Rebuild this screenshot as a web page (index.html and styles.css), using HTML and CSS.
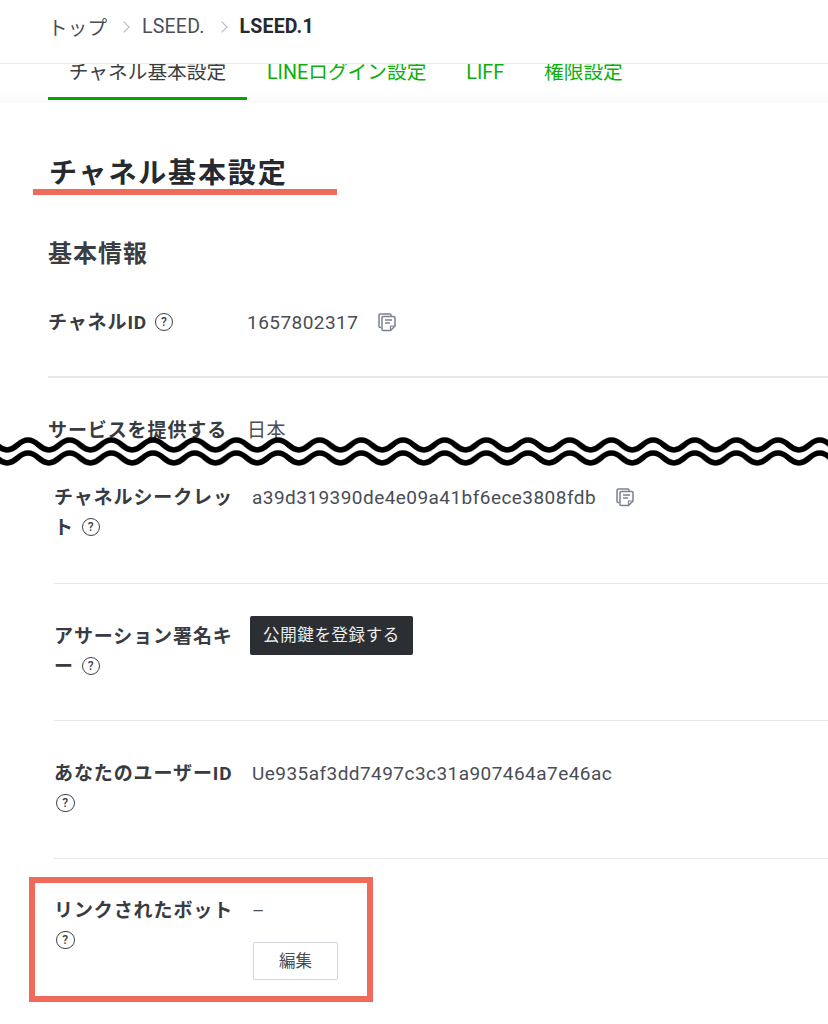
FILE: index.html
```html
<!DOCTYPE html>
<html lang="ja">
<head>
  <meta charset="UTF-8" />
  <title>チャネル基本設定</title>
  <link rel="stylesheet" href="styles.css">
</head>
<body>

  <svg width="0" height="0" class="defs">
    <symbol id="copy" viewBox="0 0 20 20">
      <path d="M4 15.500H3.200A1.200 1.200 0 0 1 2 14.300V3.200A1.200 1.200 0 0 1 3.200 2h9.600A1.200 1.200 0 0 1 14 3.200V4" fill="none" stroke="currentColor" stroke-width="1.500"/>
      <path d="M6.200 4.500h10.600A1.200 1.200 0 0 1 18 5.700V14l-4.500 4.500H6.200A1.200 1.200 0 0 1 5 17.300V5.700a1.200 1.200 0 0 1 1.200-1.200z" fill="#fff" stroke="currentColor" stroke-width="1.500"/>
      <path d="M8 8h7M8 11h5" fill="none" stroke="currentColor" stroke-width="1.500"/>
      <path d="M13.500 18.500V14H18" fill="none" stroke="currentColor" stroke-width="1.200"/>
    </symbol>
  </svg>

  <div class="top-part">
    <nav class="breadcrumb">
      <a>トップ</a>
      <span class="chevron"></span>
      <a>LSEED.</a>
      <span class="chevron"></span>
      <strong>LSEED.1</strong>
    </nav>

    <div class="tabs">
      <a class="tab active">チャネル基本設定</a>
      <a class="tab">LINEログイン設定</a>
      <a class="tab">LIFF</a>
      <a class="tab">権限設定</a>
    </div>

    <h1 class="page-title">チャネル基本設定</h1>
    <h2 class="section-title">基本情報</h2>

    <div class="row row-first">
      <div class="label">チャネルID <span class="help">?</span></div>
      <div class="value">1657802317 <svg class="copy-icon"><use href="#copy"/></svg></div>
    </div>
    <div class="row row-cut">
      <div class="label">サービスを提供する</div>
      <div class="value">日本</div>
    </div>

    <!-- annotation + torn edge -->
    <div class="title-mark"></div>
    <svg class="wave" width="828" height="33" viewBox="0 0 828 33">
      <defs>
        <pattern id="w" width="41.670" height="33" patternUnits="userSpaceOnUse" x="7.170">
          <path d="M0 13C10.400 13 10.400 3 20.835 3S31.300 13 41.670 13V33H0z" fill="#fff"/>
          <path d="M-1 13C10.400 13 10.400 3 20.835 3S31.300 13 42.670 13" fill="none" stroke="#000" stroke-width="5.600"/>
          <path d="M-1 26C10.400 26 10.400 16 20.835 16S31.300 26 42.670 26" fill="none" stroke="#000" stroke-width="5.600"/>
        </pattern>
      </defs>
      <rect width="828" height="33" fill="url(#w)"/>
    </svg>
  </div>

  <div class="bottom-part">
    <div class="row">
      <div class="label">チャネルシークレット <span class="help">?</span></div>
      <div class="value">a39d319390de4e09a41bf6ece3808fdb <svg class="copy-icon"><use href="#copy"/></svg></div>
    </div>
    <div class="row">
      <div class="label">アサーション署名キー <span class="help">?</span></div>
      <div class="value"><button class="btn-dark">公開鍵を登録する</button></div>
    </div>
    <div class="row row-tall">
      <div class="label">あなたのユーザーID <span class="help">?</span></div>
      <div class="value">Ue935af3dd7497c3c31a907464a7e46ac</div>
    </div>
    <div class="row row-last">
      <div class="label">リンクされたボット <span class="help">?</span></div>
      <div class="value">
        <div>–</div>
        <button class="btn-light">編集</button>
      </div>
      <div class="box-mark"></div>
    </div>
  </div>

</body>
</html>
```
FILE: styles.css
```css
* {
  box-sizing: border-box;
}
body {
  margin: 0;
  background: #fff;
  color: #44484e;
  font-family: Roboto, "Noto Sans CJK JP", sans-serif;
  font-size: 19px;
}
.defs {
  position: absolute;
}

/* top half of the screenshot */
.top-part {
  position: relative;
  height: 470px;
  padding-left: 48px;
  overflow: hidden;
}
.breadcrumb {
  display: flex;
  align-items: center;
  height: 64px;
  margin-left: -48px;
  padding: 0 0 10px 48px;
  border-bottom: 1px solid #ececec;
  font-size: 19.500px;
  letter-spacing: .2px;
  color: #4b4f55;
}
.breadcrumb strong {
  color: #26292d;
}
.chevron {
  width: 8px;
  height: 8px;
  margin: 0 14px 0 13px;
  border-top: 1px solid #b4b8bd;
  border-right: 1px solid #b4b8bd;
  transform: rotate(45deg);
}
.tabs {
  display: flex;
  height: 39px;
  margin-left: -48px;
  padding-left: 48px;
  background: linear-gradient(#fff 70%, #fafafa);
  overflow: hidden;
}
.tab {
  height: 42px;
  padding: 0 20px;
  margin-top: -6px;
  font-size: 19.700px;
  line-height: 30px;
  color: #0cb00c;
}
.tab.active {
  width: 199px;
  text-align: center;
  color: #3a3d42;
  border-bottom: 3px solid #00a800;
}
.page-title {
  margin: 52px 0 0 1px;
  font-size: 28px;
  line-height: 38px;
  letter-spacing: 1.850px;
  font-weight: 700;
  color: #26292d;
}
.section-title {
  margin: 43px 0 0;
  font-size: 24px;
  line-height: 36px;
  letter-spacing: 1px;
  font-weight: 700;
  color: #3a3d42;
}
.row {
  display: flex;
  border-bottom: 1px solid #e6e7e8;
}
.label {
  flex: 0 0 199px;
  padding-right: 14px;
  font-size: 19px;
  line-height: 30px;
  letter-spacing: .9px;
  font-weight: 700;
  color: #383c42;
}
.value {
  flex: 1;
  line-height: 30px;
  letter-spacing: .45px;
  color: #494d54;
}
.row-first {
  margin-top: 36px;
  height: 70px;
  border-bottom-width: 2px;
}
.row-cut {
  margin-top: 38px;
  border: 0;
}
.help {
  display: inline-flex;
  align-items: center;
  justify-content: center;
  width: 18.500px;
  height: 18.500px;
  margin-left: 2px;
  border: 1.500px solid #3d4146;
  border-radius: 50%;
  font-size: 12px;
  line-height: 1;
  letter-spacing: 0;
  font-weight: 500;
  color: #3d4146;
  vertical-align: 3px;
}
.copy-icon {
  width: 20px;
  height: 20px;
  margin-left: 14px;
  color: #7b8190;
  vertical-align: -3px;
}

/* red annotations and the torn edge, drawn over the page */
.title-mark {
  position: absolute;
  left: 33px;
  top: 189px;
  width: 304px;
  height: 6px;
  background: #ef6a5a;
}
.wave {
  position: absolute;
  left: 0;
  top: 437px;
}

/* bottom half */
.bottom-part {
  padding: 13px 0 0 54px;
}
.bottom-part .label {
  flex-basis: 198px;
}
.bottom-part .row {
  position: relative;
  height: 137px;
  padding-top: 38px;
}
.bottom-part .row:first-child {
  height: 101px;
  padding-top: 0;
}
.bottom-part .row-tall {
  height: 138px;
}
.bottom-part .row-last {
  height: 165px;
  padding-top: 37px;
  border: 0;
}
.btn-dark {
  display: block;
  width: 163px;
  height: 39px;
  margin: -6px 0 0 -2px;
  padding: 0 0 3px;
  border: 0;
  border-radius: 2px;
  background: #2b2f33;
  color: #eceded;
  font: 16.500px Roboto, "Noto Sans CJK JP", sans-serif;
  letter-spacing: .6px;
}
.btn-light {
  display: block;
  width: 85px;
  height: 38px;
  margin: 16px 0 0 1px;
  padding: 0 0 3px;
  border: 1px solid #d3d6da;
  border-radius: 2px;
  background: #fff;
  color: #494d54;
  font: 16.500px Roboto, "Noto Sans CJK JP", sans-serif;
}
.box-mark {
  position: absolute;
  left: -25px;
  top: 18px;
  width: 344px;
  height: 125px;
  border: 6px solid #ef6a5a;
}
```
